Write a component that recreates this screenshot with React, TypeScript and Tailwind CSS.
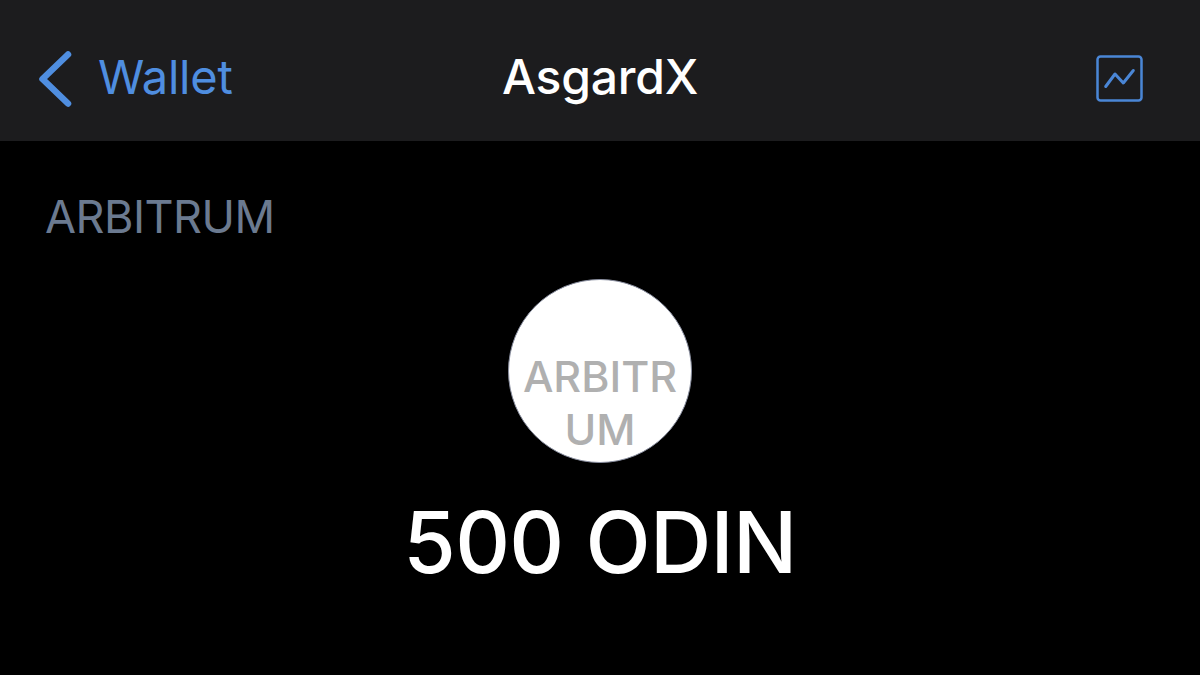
import React from "react";

export default function App() {
  return (
    <div className="w-[1200px] h-[675px] overflow-hidden bg-black flex flex-col font-['Inter','Liberation_Sans',sans-serif]">
      <header className="h-[141px] shrink-0 bg-[#1c1c1e] flex items-center justify-between pl-[38px] pr-[56px] pt-[16px] relative">
        <div className="flex items-center gap-[26px] text-[#4f8ee0]">
          <svg width="34" height="56" viewBox="0 0 34 56" fill="none">
            <path d="M30 3.5 L4.5 28 L30 52.5" stroke="#4f8ee0" strokeWidth="6.5" strokeLinecap="round" strokeLinejoin="round" />
          </svg>
          <span className="text-[47px] leading-none tracking-[-0.2px] mb-[4px]">Wallet</span>
        </div>
        <div className="absolute left-0 right-0 text-center text-white text-[48px] leading-none font-medium tracking-[-0.2px] mb-[3px]">AsgardX</div>
        <svg width="48" height="48" viewBox="0 0 48 48" fill="none">
          <rect x="1.5" y="1.5" width="44" height="44" rx="3" stroke="#4a86d6" strokeWidth="2.5" />
          <path d="M9.7 31.5 L19 19 L27.3 28 L37.3 15.5" stroke="#4a86d6" strokeWidth="3" strokeLinecap="round" strokeLinejoin="round" />
        </svg>
      </header>
      <main className="flex flex-col flex-1">
        <div className="pl-[45px] pt-[51px] text-[#6b7a90] text-[45px] leading-[50px] tracking-[-0.5px]">ARBITRUM</div>
        <div className="mt-[37px] self-center w-[184px] h-[184px] rounded-full bg-white border border-[#8a8fa0] flex items-end justify-center overflow-hidden">
          <div className="text-center text-[#b0b0b0] text-[43px] font-medium leading-[53px] mb-[6px]">
            <div>ARBITR</div>
            <div>UM</div>
          </div>
        </div>
        <div className="mt-[28px] text-center text-white text-[85px] font-medium leading-[104px] tracking-[-0.7px]">500 ODIN</div>
      </main>
    </div>
  );
}
